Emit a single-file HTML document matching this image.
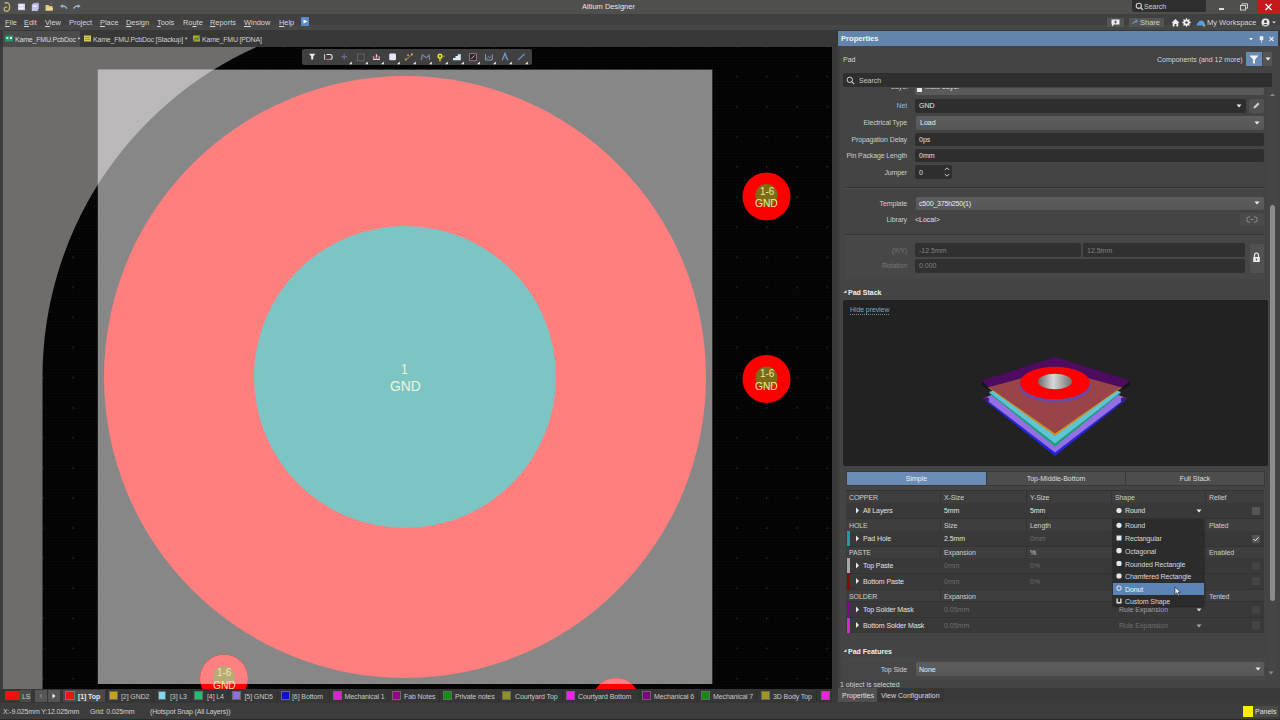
<!DOCTYPE html>
<html><head><meta charset="utf-8">
<style>
*{box-sizing:border-box}
html,body{margin:0;padding:0}
body{width:1280px;height:720px;overflow:hidden;position:relative;background:#3c3c3c;font-family:"Liberation Sans",sans-serif;font-size:7px;color:#d6d6d6}
.a{position:absolute;white-space:nowrap}
.t{position:absolute;white-space:nowrap;line-height:1}
.m{position:absolute;top:0}
.lbl{font-size:7px;color:#cdcdcd;text-align:right;letter-spacing:-0.12px}
.hr{left:846px;width:418px;background:#3e3e3e}
.dr{left:846px;width:418px;background:#393939}
.th{font-size:7px;color:#cfcfcf;letter-spacing:-0.1px}
.td{font-size:7px;color:#e2e2e2;letter-spacing:-0.1px}
.tdd{font-size:7px;color:#6e6e6e}
.dm{left:1125px;font-size:7px;color:#d8d8d8;letter-spacing:-0.1px}
.lb{font-size:7px;color:#c8c8c8;letter-spacing:-0.1px}
.fd{background:#2e2e2e;border-radius:2px}
.dd{background:linear-gradient(#5e5e5e,#565656);border-radius:2px}
</style></head><body>

<!-- title bar -->
<div class="a" style="left:0;top:0;width:1280px;height:13.5px;background:#4f4f4e"></div>
<div class="t" style="left:582px;top:3px;font-size:7.5px;color:#e6e6e6">Altium Designer</div>

<!-- menu bar -->
<div class="a" style="left:0;top:13.5px;width:1280px;height:16px;background:linear-gradient(#404040 0,#414141 68%,#474747 72%,#474747 100%)"></div>
<!-- tab bar -->
<div class="a" style="left:0;top:29.5px;width:1280px;height:17.5px;background:#383838"></div>


<!-- title bar icons -->
<svg class="a" style="left:0;top:0" width="90" height="14">
  <path d="M4.6,3 Q9.6,1.8 9.6,6.8 Q9.6,11.3 6.4,11.3 Q4,11.3 4.2,8.8 Q4.5,6.6 7.2,7.2" fill="none" stroke="#c4b478" stroke-width="1.3"/>
  <rect x="18" y="3.6" width="7" height="6.6" fill="#cfcde8"/><rect x="19.3" y="4.6" width="4.4" height="1.6" fill="#f4f4fc"/><rect x="19.3" y="7.4" width="4.4" height="1.8" fill="#f4f4fc"/>
  <rect x="33" y="2.8" width="6" height="6.5" fill="#a8a6d4"/><rect x="31.8" y="4.2" width="6" height="6.8" fill="#c4c2e8"/><rect x="33" y="5.5" width="3.6" height="1.5" fill="#eeeefa"/>
  <path d="M45.5,5 L48.5,5 L49.5,6 L52.5,6 L52.5,10.5 L45.5,10.5 Z" fill="#d8c890"/><path d="M46.5,7.8 L53.2,7.8 L52.5,10.5 L45.5,10.5 Z" fill="#f0d888"/><path d="M51,4.5 L52,2.5" stroke="#a0a0a0" stroke-width="0.6"/>
  <path d="M61.5,6.4 Q65,5 67,8.6" fill="none" stroke="#9ab8dc" stroke-width="1.3"/><path d="M60,6.3 L62.6,4.2 L62.8,8Z" fill="#9ab8dc"/>
  <path d="M79,6.4 Q75.5,5 73.6,8.6" fill="none" stroke="#9ab8dc" stroke-width="1.3"/><path d="M80.6,6.3 L78,4.2 L77.8,8Z" fill="#9ab8dc"/>
</svg>
<!-- title search -->
<div class="a" style="left:1132px;top:0;width:74px;height:12px;background:#2f2f2f;border-radius:0 0 2px 2px"></div>
<svg class="a" style="left:1135px;top:2px" width="9" height="9"><circle cx="3.8" cy="3.8" r="2.6" fill="none" stroke="#d0d0d0" stroke-width="1.1"/><path d="M5.6,5.6 L8,8" stroke="#d0d0d0" stroke-width="1.2"/></svg>
<div class="t" style="left:1144px;top:3px;font-size:7px;color:#cfcfcf">Search</div>
<div class="a" style="left:1219px;top:8px;width:5px;height:1.5px;background:#dcdcdc"></div>
<svg class="a" style="left:1240px;top:3px" width="9" height="8"><rect x="0.5" y="2.5" width="5" height="4.5" fill="none" stroke="#dcdcdc" stroke-width="0.9"/><path d="M2,2.5 V0.8 H7.5 V5.2 H5.5" fill="none" stroke="#dcdcdc" stroke-width="0.9"/></svg>
<div class="a" style="left:1257px;top:0;width:23px;height:14px;background:#c41a1e"></div>
<svg class="a" style="left:1264px;top:3px" width="9" height="8"><path d="M1.5,1 L7.5,7 M7.5,1 L1.5,7" stroke="#fff" stroke-width="1.2"/></svg>

<!-- menu -->
<div class="t" style="left:5px;top:19px;font-size:7.4px;color:#d8d8d8">
<span class="m" style="left:0"><u>F</u>ile</span><span class="m" style="left:19px"><u>E</u>dit</span><span class="m" style="left:40px"><u>V</u>iew</span><span class="m" style="left:64px">Pro<u>j</u>ect</span><span class="m" style="left:95px"><u>P</u>lace</span><span class="m" style="left:121px"><u>D</u>esign</span><span class="m" style="left:152px"><u>T</u>ools</span><span class="m" style="left:178px">Ro<u>u</u>te</span><span class="m" style="left:205px"><u>R</u>eports</span><span class="m" style="left:239px"><u>W</u>indow</span><span class="m" style="left:274px"><u>H</u>elp</span></div>
<div class="a" style="left:301px;top:17px;width:8px;height:9px;background:#5c8cc4;border-radius:1px"></div>
<svg class="a" style="left:303px;top:19px" width="5" height="5"><path d="M0.5,0.5 L4.5,2.5 L0.5,4.5Z" fill="#fff"/></svg>

<!-- menu right -->
<div class="a" style="left:1107px;top:18px;width:17px;height:9px;background:#555"></div>
<svg class="a" style="left:1111px;top:19px" width="10" height="8"><path d="M0.5,0.5 H8.5 V5.5 H3 L1,7.5 V5.5 H0.5Z" fill="#eee"/><path d="M4.5,1.5 V4.5 M3,3 H6" stroke="#555" stroke-width="0.9"/></svg>
<div class="a" style="left:1129px;top:18px;width:35px;height:9px;background:#555"></div>
<svg class="a" style="left:1132px;top:19px" width="7" height="6"><path d="M0.5,5 Q1.5,2 5,2 M3.5,0.5 L5.5,2 L3.5,3.5" fill="none" stroke="#6f9fd8" stroke-width="1"/></svg>
<div class="t" style="left:1140px;top:19px;font-size:7.5px;color:#cfcfcf">Share</div>
<svg class="a" style="left:1171px;top:18px" width="9" height="9"><path d="M4.5,1 L8.5,4.8 H7.3 V8.5 H5.4 V6 H3.6 V8.5 H1.7 V4.8 H0.5Z" fill="#f0f0f0"/></svg>
<svg class="a" style="left:1182px;top:18px" width="9" height="9"><circle cx="4.5" cy="4.5" r="3.1" fill="#f0f0f0"/><circle cx="4.5" cy="4.5" r="1.3" fill="#404040"/><path d="M4.5,0.3 V8.7 M0.3,4.5 H8.7 M1.5,1.5 L7.5,7.5 M7.5,1.5 L1.5,7.5" stroke="#f0f0f0" stroke-width="1.3"/><circle cx="4.5" cy="4.5" r="1.2" fill="#404040"/></svg>
<svg class="a" style="left:1196px;top:18px" width="10" height="9"><path d="M1,7.5 Q0,5.5 2,5 Q2.5,2 5.5,2.5 Q8,2.5 8.5,5 Q9.5,6 9,7.5Z" fill="#5a9ae0"/><circle cx="8" cy="7.5" r="1.3" fill="#6cc06c"/></svg>
<div class="t" style="left:1207px;top:19px;font-size:7.5px;color:#d8d8d8">My Workspace</div>
<svg class="a" style="left:1261px;top:18px" width="18" height="9"><circle cx="4.5" cy="4.5" r="4" fill="#e8e8e8"/><circle cx="4.5" cy="3.5" r="1.5" fill="#404040"/><path d="M1.8,7.2 Q4.5,4.8 7.2,7.2" fill="#404040"/><path d="M11,3.5 L15,3.5 L13,5.5Z" fill="#dcdcdc"/></svg>

<!-- doc tabs -->
<div class="a" style="left:3px;top:31px;width:77px;height:16px;background:#4b4b4b"></div>
<svg class="a" style="left:5px;top:35px" width="9" height="8"><rect x="0" y="0.5" width="8" height="6" fill="#1e9a6a"/><rect x="1.3" y="2" width="2" height="2" fill="#d8f0e0"/><rect x="5" y="2" width="2" height="2" fill="#d8f0e0"/></svg>
<div class="t" style="left:15px;top:36px;font-size:7px;letter-spacing:-0.2px;color:#dcdcdc">Kame_FMU.PcbDoc *</div>
<svg class="a" style="left:84px;top:35px" width="8" height="8"><rect x="0" y="0.5" width="7" height="6" fill="#d8c860"/><rect x="1" y="2" width="5" height="1" fill="#a89838"/><rect x="1" y="4" width="5" height="1" fill="#a89838"/></svg>
<div class="t" style="left:93px;top:36px;font-size:7px;letter-spacing:-0.2px;color:#cfcfcf">Kame_FMU.PcbDoc [Stackup] *</div>
<svg class="a" style="left:193px;top:35px" width="8" height="8"><rect x="0" y="0.5" width="7" height="6" fill="#b8a820"/><path d="M0.5,6 L3,3 L5,4.5 L7,1" fill="none" stroke="#2a8a5a" stroke-width="1.2"/></svg>
<div class="t" style="left:202px;top:36px;font-size:7px;letter-spacing:-0.2px;color:#cfcfcf">Kame_FMU [PDNA]</div>

<!-- canvas -->
<div class="a" style="left:0;top:47px;width:837px;height:642px;background:#3c3c3c"></div>
<svg class="a" style="left:0;top:0" width="837" height="689" viewBox="0 0 837 689">
  <defs>
    <clipPath id="cv"><rect x="3" y="47" width="829" height="642"/></clipPath>
    <clipPath id="brd"><rect x="97.8" y="69.6" width="614.5" height="614.4"/></clipPath>
  </defs>
  <g clip-path="url(#cv)">
    <rect x="3" y="47" width="829" height="642" fill="#010101"/>
    <defs>
      <pattern id="g3" x="0.7" y="0.4" width="3" height="3" patternUnits="userSpaceOnUse"><rect x="0" y="0" width="3" height="0.8" fill="#080808"/><rect x="0" y="0" width="0.8" height="3" fill="#080808"/></pattern>
      <pattern id="g30" x="72" y="75.6" width="30.17" height="30.1" patternUnits="userSpaceOnUse"><rect x="0" y="0" width="2" height="2" fill="#191919"/></pattern>
    </defs>
    <rect x="3" y="47" width="829" height="642" fill="url(#g3)"/>
    <rect x="3" y="47" width="829" height="642" fill="url(#g30)"/>
    <path d="M3,47 L256.4,47 A361.5 361.5 0 0 0 42.5,377 L42.5,689 L3,689 Z" fill="#6f6d6c"/>
    <rect x="97.8" y="69.6" width="614.5" height="614.4" fill="#878787"/>
    <path clip-path="url(#brd)" d="M3,47 L256.4,47 A361.5 361.5 0 0 0 42.5,377 L42.5,689 L3,689 Z" fill="#bab8b8"/>
    <circle cx="405" cy="377" r="301" fill="#ff7f7f"/>
    <circle cx="405" cy="377" r="151" fill="#7dc5c4"/>
  </g>
</svg>


<!-- canvas overlays -->
<svg class="a" style="left:0;top:0" width="837" height="689">
  <defs><clipPath id="cv2"><rect x="3" y="47" width="829" height="642"/></clipPath>
  <clipPath id="brd2"><rect x="97.8" y="69.6" width="614.5" height="614.4"/></clipPath></defs>
  <g clip-path="url(#cv2)">
  <!-- right pads -->
  <circle cx="766.5" cy="196.5" r="24" fill="#fe0000"/>
  <circle cx="766.5" cy="195" r="11" fill="#7e6c12"/>
  <circle cx="766.5" cy="379" r="24" fill="#fe0000"/>
  <circle cx="766.5" cy="377.5" r="11" fill="#7e6c12"/>
  <!-- bottom pads -->
  <circle cx="224" cy="678.5" r="24" fill="#fe0000"/>
  <g clip-path="url(#brd2)"><circle cx="224" cy="678.5" r="24" fill="#ff8080"/><circle cx="224" cy="677" r="11" fill="#b8aa78"/></g>
  <circle cx="616" cy="702" r="24" fill="#fe0000"/>
  <g clip-path="url(#brd2)"><circle cx="616" cy="702" r="24" fill="#ff8080"/></g>
  </g>
</svg>
<div class="t" style="left:401px;top:361.3px;font-size:15.5px;color:#eef6d8;transform:scaleX(0.78);transform-origin:0 0">1</div>
<div class="t" style="left:389.5px;top:378.3px;font-size:15.5px;color:#eef6d8;transform:scaleX(0.89);transform-origin:0 0">GND</div>
<div class="t" style="left:759.8px;top:185.5px;font-size:11.5px;color:#f4e6a4;transform:scaleX(0.86);transform-origin:0 0">1-6</div>
<div class="t" style="left:755.3px;top:198px;font-size:11px;color:#f4e6a4;transform:scaleX(0.93);transform-origin:0 0">GND</div>
<div class="t" style="left:759.8px;top:368px;font-size:11.5px;color:#f4e6a4;transform:scaleX(0.86);transform-origin:0 0">1-6</div>
<div class="t" style="left:755.3px;top:380.5px;font-size:11px;color:#f4e6a4;transform:scaleX(0.93);transform-origin:0 0">GND</div>
<div class="a" style="left:190px;top:640px;width:70px;height:49px;overflow:hidden">
<div class="t" style="left:27px;top:27px;font-size:11.5px;color:#f4e6a4;transform:scaleX(0.86);transform-origin:0 0">1-6</div>
<div class="t" style="left:23px;top:40px;font-size:11px;color:#f4e6a4;transform:scaleX(0.93);transform-origin:0 0">GND</div>
</div>

<!-- floating toolbar -->
<div class="a" style="left:302px;top:49.3px;width:229.5px;height:15.3px;background:#404040;border-radius:2px"></div>
<svg class="a" style="left:302px;top:49px" width="230" height="16" viewBox="0 0 230 16">
  <path d="M7,4.8 H13.4 L11.2,7.5 V10.6 H9.2 V7.5Z" fill="#e8eef2"/>
  <path d="M22.6,5.2 V10.8" stroke="#d8d8d8" stroke-width="1"/><path d="M24.5,5.5 H28 Q30.2,5.5 30.2,8 Q30.2,10.5 28,10.5 H24.5" fill="none" stroke="#e4e4e4" stroke-width="1.1"/><path d="M25,10.5 H28.5" stroke="#c87878" stroke-width="1.1"/>
  <path d="M42.2,4.8 V10.8 M39.2,7.8 H45.3" stroke="#7a78a8" stroke-width="0.9"/>
  <rect x="55.5" y="5" width="6.7" height="6.8" fill="none" stroke="#686868" stroke-width="0.8"/>
  <path d="M71,11 H78 V9.8 H71Z" fill="#dcdcf4"/><path d="M71.6,9.8 V7.3 M74.5,9.8 V5.2 M77.3,9.8 V7.3" stroke="#d89098" stroke-width="1.5"/><path d="M74.5,5.5 V8" stroke="#e8e8f0" stroke-width="0.8"/>
  <rect x="87.2" y="4.6" width="6.8" height="6.6" fill="#e4e4f2" rx="1.2"/>
  <path d="M103.5,11 L110,5.5" stroke="#8a7040" stroke-width="1.1"/><circle cx="103.8" cy="10.6" r="1" fill="#c8a850"/><circle cx="110" cy="5.3" r="1.1" fill="#c8a850"/><circle cx="106" cy="6.2" r="0.9" fill="#c8a850"/>
  <path d="M119.2,11 L120.5,6 L124.5,8.8 L127,6 L127.8,11" fill="none" stroke="#7888a8" stroke-width="1.2"/>
  <circle cx="138" cy="7.2" r="2.6" fill="#e8e020"/><circle cx="138" cy="7.2" r="1.1" fill="#605810"/><path d="M138,9.6 V12.2" stroke="#e8d840" stroke-width="1.4"/><path d="M140.6,7.2 H143" stroke="#50a050" stroke-width="1.2"/>
  <path d="M151,11.2 V9 H153.5 V7 H155.8 V5.2 H158.8 V11.2Z" fill="#d8eaf4"/>
  <rect x="167.6" y="4.7" width="6.8" height="7" fill="#2c2428" stroke="#a87898" stroke-width="0.9"/><path d="M169.3,10 L172.7,6.4" stroke="#e0c8b0" stroke-width="0.9"/>
  <path d="M183.5,5.2 V11 H190.3 V5.2" fill="none" stroke="#8898b0" stroke-width="1"/><path d="M184.8,9.8 L186.5,7.5 L188,9 L189,7.2" fill="none" stroke="#8898b0" stroke-width="0.7"/>
  <path d="M200.2,11.3 L203,4.5 L205.8,11.3" fill="none" stroke="#7898c8" stroke-width="1.3"/><path d="M201.5,9 H204.5" stroke="#5070a0" stroke-width="0.7"/>
  <path d="M216,11 L222.6,5" stroke="#7098c8" stroke-width="1.1"/>
  <g fill="#f0f0f0"><path d="M47.0,15.3 L49.8,12.5 V15.3Z"/><path d="M63.0,15.3 L65.8,12.5 V15.3Z"/><path d="M79.0,15.3 L81.8,12.5 V15.3Z"/><path d="M95.0,15.3 L97.8,12.5 V15.3Z"/><path d="M111.0,15.3 L113.8,12.5 V15.3Z"/><path d="M127.0,15.3 L129.8,12.5 V15.3Z"/><path d="M143.0,15.3 L145.8,12.5 V15.3Z"/><path d="M159.0,15.3 L161.8,12.5 V15.3Z"/><path d="M175.0,15.3 L177.8,12.5 V15.3Z"/><path d="M191.0,15.3 L193.8,12.5 V15.3Z"/><path d="M207.0,15.3 L209.8,12.5 V15.3Z"/><path d="M223.0,15.3 L225.8,12.5 V15.3Z"/></g>
</svg>
<!-- right panel -->
<div class="a" style="left:832px;top:30px;width:5px;height:675px;background:#383838"></div>
<div class="a" style="left:837px;top:46.3px;width:443px;height:658px;background:#444444"></div>
<div class="a" style="left:837px;top:46.3px;width:2.5px;height:642px;background:#3f3f3f"></div>
<div class="a" style="left:837.5px;top:31.3px;width:440.5px;height:15px;background:#6384ab"></div>
<div class="a" style="left:836px;top:31.3px;width:1.5px;height:15px;background:#2f3a33"></div>
<div class="t" style="left:841px;top:35px;font-size:7.6px;font-weight:bold;color:#f4f4f4">Properties</div>
<svg class="a" style="left:1246px;top:35px" width="32" height="9">
  <path d="M3,3 L7,3 L5,5.5Z" fill="#e8eef6"/>
  <path d="M14,1.5 H17 V5 H14Z M15.5,5 V8" fill="#e8eef6" stroke="#e8eef6" stroke-width="0.6"/>
  <path d="M23.5,2 L27.5,6 M27.5,2 L23.5,6" stroke="#e8eef6" stroke-width="1.1"/>
</svg>
<div class="t" style="left:843px;top:55.5px;font-size:7px;color:#d4d4d4">Pad</div>
<div class="t" style="left:1157px;top:55.5px;font-size:7px;color:#d4d4d4">Components (and 12 more)</div>
<div class="a" style="left:1246px;top:52px;width:16px;height:14px;background:#6a8cb4"></div>
<svg class="a" style="left:1249px;top:55px" width="10" height="9"><path d="M0.5,0.5 H9.5 L6,4.5 V8.5 H4 V4.5Z" fill="#f4f4f4"/></svg>
<div class="a" style="left:1263px;top:52px;width:9px;height:14px;background:#555"></div>
<svg class="a" style="left:1265px;top:57px" width="6" height="4"><path d="M0.5,0.5 H5.5 L3,3.5Z" fill="#eee"/></svg>

<div class="a" style="left:843px;top:73px;width:429px;height:14px;background:#2f2f2f;border-radius:2px"></div>
<svg class="a" style="left:846px;top:76px" width="9" height="9"><circle cx="3.8" cy="3.8" r="2.7" fill="none" stroke="#cfcfcf" stroke-width="1"/><path d="M5.7,5.7 L8.2,8.2" stroke="#cfcfcf" stroke-width="1.1"/></svg>
<div class="t" style="left:859px;top:76.5px;font-size:7px;color:#c8c8c8">Search</div>

<!-- clipped scrolling content -->
<div class="a" style="left:837px;top:88px;width:431px;height:595px;overflow:hidden">
 <div class="a" style="left:-837px;top:-88px;width:1280px;height:720px">
  <div class="a" style="left:915px;top:81px;width:349px;height:14px;background:#5a5a5a;border-radius:2px"></div>
  <div class="t" style="left:891px;top:82.5px;font-size:7px;color:#cfcfcf">Layer</div>
  <div class="a" style="left:917px;top:85px;width:5px;height:7px;background:#e8e8e8"></div>
  <div class="t" style="left:925px;top:82.5px;font-size:7px;color:#e6e6e6">Multi-Layer</div>
 </div>
</div>
<div class="a" style="left:1268px;top:88px;width:8px;height:595px;background:#454545"></div>
<div class="a" style="left:1270px;top:205px;width:5px;height:396px;background:#8c8c8c;border-radius:2.5px"></div>
<svg class="a" style="left:1269px;top:92px" width="7" height="5"><path d="M1,4 L3.5,1.5 L6,4Z" fill="#8a8a8a"/></svg>

<div class="t lbl" style="right:373px;top:102px;color:#8fb6dc">Net</div>
<div class="a fd" style="left:915px;top:98.5px;width:331px;height:14px"></div>
<div class="t" style="left:919px;top:102px;font-size:7px;color:#e8e8e8">GND</div>
<svg class="a" style="left:1236px;top:103.5px" width="6" height="4"><path d="M0.5,0.5 H5.5 L3,3.5Z" fill="#eee"/></svg>
<div class="a" style="left:1249px;top:99px;width:15px;height:13.5px;background:#515151;border-radius:2px"></div>
<svg class="a" style="left:1252px;top:101px" width="9" height="9"><path d="M1.5,7.5 L2,5.5 L6,1.5 L7.5,3 L3.5,7Z" fill="#cfcfcf"/></svg>

<div class="t lbl" style="right:373px;top:119px">Electrical Type</div>
<div class="a dd" style="left:916px;top:116px;width:348px;height:13.5px"></div>
<div class="t" style="left:920px;top:119px;font-size:7px;color:#eeeeee">Load</div>
<svg class="a" style="left:1254px;top:121px" width="6" height="4"><path d="M0.5,0.5 H5.5 L3,3.5Z" fill="#eee"/></svg>

<div class="t lbl" style="right:373px;top:135.5px">Propagation Delay</div>
<div class="a fd" style="left:915px;top:132.5px;width:349px;height:13.5px"></div>
<div class="t" style="left:919px;top:135.5px;font-size:7px;color:#e0e0e0">0ps</div>

<div class="t lbl" style="right:373px;top:152px">Pin Package Length</div>
<div class="a fd" style="left:915px;top:148.7px;width:349px;height:13.5px"></div>
<div class="t" style="left:919px;top:152px;font-size:7px;color:#e0e0e0">0mm</div>

<div class="t lbl" style="right:373px;top:168.5px">Jumper</div>
<div class="a fd" style="left:915px;top:165px;width:37px;height:14px"></div>
<div class="t" style="left:919px;top:168.5px;font-size:7px;color:#e0e0e0">0</div>
<svg class="a" style="left:944px;top:166px" width="6" height="12"><path d="M0.8,4 L3,1.8 L5.2,4 M0.8,8 L3,10.2 L5.2,8" fill="none" stroke="#d8d8d8" stroke-width="0.9"/></svg>

<div class="a" style="left:845px;top:186.5px;width:419px;height:1px;background:#363636"></div>
<div class="a" style="left:845px;top:187.5px;width:419px;height:1px;background:#4c4c4c"></div>

<div class="t lbl" style="right:373px;top:199.5px">Template</div>
<div class="a dd" style="left:916px;top:196.5px;width:348px;height:13.5px"></div>
<div class="t" style="left:919px;top:199.5px;font-size:7px;letter-spacing:-0.2px;color:#eeeeee">c500_375h250(1)</div>
<svg class="a" style="left:1254px;top:201px" width="6" height="4"><path d="M0.5,0.5 H5.5 L3,3.5Z" fill="#eee"/></svg>

<div class="t lbl" style="right:373px;top:216px">Library</div>
<div class="t" style="left:915px;top:216px;font-size:7px;color:#e0e0e0">&lt;Local&gt;</div>
<div class="a" style="left:1240px;top:213px;width:24px;height:13px;background:#4a4a4a;border-radius:1px"></div>
<svg class="a" style="left:1246px;top:216px" width="12" height="7"><path d="M4,1 H2.5 Q0.8,1 0.8,3.5 Q0.8,6 2.5,6 H4 M8,1 H9.5 Q11.2,1 11.2,3.5 Q11.2,6 9.5,6 H8 M4.5,3.5 H7.5" fill="none" stroke="#9a9a9a" stroke-width="0.9"/></svg>

<div class="a" style="left:845px;top:233.5px;width:419px;height:1px;background:#363636"></div>
<div class="a" style="left:845px;top:234.5px;width:419px;height:44px;background:#474747"></div>

<div class="t lbl" style="right:373px;top:246.5px;color:#767676">(X/Y)</div>
<div class="a fd" style="left:915px;top:243px;width:165.5px;height:13.5px;background:#303030"></div>
<div class="t" style="left:919px;top:246.5px;font-size:7px;color:#808080">-12.5mm</div>
<div class="a fd" style="left:1083px;top:243px;width:162px;height:13.5px;background:#303030"></div>
<div class="t" style="left:1087px;top:246.5px;font-size:7px;color:#808080">12.5mm</div>
<div class="a" style="left:1249.5px;top:243.5px;width:14.5px;height:29px;background:#515151;border-radius:1px"></div>
<svg class="a" style="left:1252px;top:252px" width="9" height="11"><path d="M2.5,5 V3.5 Q2.5,1 4.5,1 Q6.5,1 6.5,3.5 V5" fill="none" stroke="#f0f0f0" stroke-width="1.2"/><rect x="1.2" y="5" width="6.6" height="5" fill="#f0f0f0"/><circle cx="4.5" cy="7.5" r="0.9" fill="#555"/></svg>
<div class="t lbl" style="right:373px;top:262px;color:#767676">Rotation</div>
<div class="a fd" style="left:915px;top:259px;width:330px;height:14px;background:#303030"></div>
<div class="t" style="left:919px;top:262px;font-size:7px;color:#808080">0.000</div>

<svg class="a" style="left:843px;top:289px" width="5" height="5"><path d="M0.5,4 L3.5,1 V4Z" fill="#e0e0e0"/></svg>
<div class="t" style="left:848px;top:288.5px;font-size:7px;font-weight:bold;color:#f0f0f0">Pad Stack</div>

<div class="a" style="left:843px;top:300px;width:425px;height:165.5px;background:#222222;border-radius:2px"></div>
<div class="t" style="left:850px;top:306.5px;font-size:6.8px;color:#82a6cc;border-bottom:1px dotted #6a8cb0;padding-bottom:0.5px">Hide preview</div>



<!-- 3D preview -->
<svg class="a" style="left:960px;top:340px" width="190" height="130" viewBox="960 340 190 130">
  <path d="M983,399 L1055,369 L1127,399 L1055,456Z" fill="#2424d8"/>
  <path d="M984,398 L1055,369 L1126,398 L1055,452.5Z" fill="#9470e0"/>
  <path d="M983,396.5 L989,398 L989,401.5 L984,400Z" fill="#4a1a60"/>
  <path d="M1121,398 L1127,396.5 L1126,400 L1121,401.5Z" fill="#4a1a60"/>
  <path d="M989,393 L1055,369 L1121,393 L1055,446.5Z" fill="#18a078"/>
  <path d="M989,392 L1055,369 L1121,392 L1055,443.5Z" fill="#60c4d4"/>
  <path d="M987.5,387 L1055,369 L1122.5,387 L1055,436Z" fill="#c89028"/>
  <path d="M988.5,387 L1055,369 L1121.5,387 L1055,433.5Z" fill="#984448"/>
  <path d="M982,380.5 L1055,357 L1130,380.5 L1122,387.5 L1055,369 L988,387.5Z" fill="#4e0c60"/>
  <path d="M982,381 L988,387.5 L988,390 L982,385Z" fill="#151515"/>
  <path d="M1130,381 L1122,387.5 L1122,390 L1130,385Z" fill="#151515"/>
  <ellipse cx="1055" cy="385.5" rx="36" ry="16.8" fill="#6a48a8"/>
  <ellipse cx="1055" cy="383" rx="35" ry="16.3" fill="#fe0000"/>
  <defs><linearGradient id="hg" x1="0" x2="1"><stop offset="0" stop-color="#6a6a6a"/><stop offset="0.45" stop-color="#d8d8d8"/><stop offset="1" stop-color="#707070"/></linearGradient></defs>
  <ellipse cx="1055" cy="381.5" rx="17" ry="7.7" fill="url(#hg)"/>
</svg>

<!-- segmented -->
<div class="a" style="left:846px;top:470.5px;width:419px;height:15px;background:#3a3a3a"></div>
<div class="a" style="left:847px;top:471.5px;width:139px;height:13px;background:#6a8cb5"></div>
<div class="a" style="left:987px;top:471.5px;width:138px;height:13px;background:#4d4d4d"></div>
<div class="a" style="left:1126px;top:471.5px;width:138px;height:13px;background:#4d4d4d"></div>
<div class="t" style="left:847px;width:139px;text-align:center;top:474.5px;font-size:7px;color:#eef2f8">Simple</div>
<div class="t" style="left:987px;width:138px;text-align:center;top:474.5px;font-size:7px;color:#dcdcdc">Top-Middle-Bottom</div>
<div class="t" style="left:1126px;width:138px;text-align:center;top:474.5px;font-size:7px;color:#dcdcdc">Full Stack</div>

<!-- table -->
<div class="a" style="left:846px;top:490px;width:418px;height:143px;background:#333"></div>
<div class="a hr" style="top:491px;height:11.5px"></div>
<div class="a dr" style="top:503px;height:15px"></div>
<div class="a hr" style="top:519px;height:11.5px"></div>
<div class="a dr" style="top:531px;height:15px"></div>
<div class="a hr" style="top:546.5px;height:11px"></div>
<div class="a dr" style="top:558px;height:15px"></div>
<div class="a dr" style="top:573.5px;height:15.5px"></div>
<div class="a hr" style="top:590px;height:11px"></div>
<div class="a dr" style="top:602px;height:15px"></div>
<div class="a dr" style="top:617.5px;height:15px"></div>
<div class="a" style="left:939.5px;top:491px;width:1px;height:11.5px;background:#333"></div>
<div class="a" style="left:1025.5px;top:491px;width:1px;height:11.5px;background:#333"></div>
<div class="a" style="left:1110.5px;top:491px;width:1px;height:11.5px;background:#333"></div>
<div class="a" style="left:1204.5px;top:491px;width:1px;height:11.5px;background:#333"></div>
<div class="a" style="left:939.5px;top:519px;width:1px;height:11.5px;background:#333"></div>
<div class="a" style="left:1025.5px;top:519px;width:1px;height:11.5px;background:#333"></div>
<div class="a" style="left:1204.5px;top:519px;width:1px;height:11.5px;background:#333"></div>
<div class="a" style="left:939.5px;top:546.5px;width:1px;height:11px;background:#333"></div>
<div class="a" style="left:1025.5px;top:546.5px;width:1px;height:11px;background:#333"></div>
<div class="a" style="left:1204.5px;top:546.5px;width:1px;height:11px;background:#333"></div>
<div class="a" style="left:939.5px;top:590px;width:1px;height:11px;background:#333"></div>
<div class="a" style="left:1204.5px;top:590px;width:1px;height:11px;background:#333"></div>
<div class="a" style="left:847px;top:531px;width:3px;height:15px;background:#18a0a0"></div>
<div class="a" style="left:847px;top:558px;width:3px;height:15px;background:#a8a8a8"></div>
<div class="a" style="left:847px;top:573.5px;width:3px;height:15.5px;background:#8a0a0a"></div>
<div class="a" style="left:847px;top:602px;width:3px;height:15px;background:#800a88"></div>
<div class="a" style="left:847px;top:617.5px;width:3px;height:15px;background:#e020e0"></div>

<div class="t th" style="left:849px;top:493.5px">COPPER</div><div class="t th" style="left:944px;top:493.5px">X-Size</div><div class="t th" style="left:1030px;top:493.5px">Y-Size</div><div class="t th" style="left:1115px;top:493.5px">Shape</div><div class="t th" style="left:1209px;top:493.5px">Relief</div>
<div class="t th" style="left:849px;top:521.5px">HOLE</div><div class="t th" style="left:944px;top:521.5px">Size</div><div class="t th" style="left:1030px;top:521.5px">Length</div><div class="t th" style="left:1209px;top:521.5px">Plated</div>
<div class="t th" style="left:849px;top:549px">PASTE</div><div class="t th" style="left:944px;top:549px">Expansion</div><div class="t th" style="left:1030px;top:549px">%</div><div class="t th" style="left:1209px;top:549px">Enabled</div>
<div class="t th" style="left:849px;top:592.5px">SOLDER</div><div class="t th" style="left:944px;top:592.5px">Expansion</div><div class="t th" style="left:1209px;top:592.5px">Tented</div>

<svg class="a" style="left:855px;top:503px" width="5" height="130"><g fill="#e8e8e8"><path d="M1,4.5 L4,7.5 L1,10.5Z"/><path d="M1,32.5 L4,35.5 L1,38.5Z"/><path d="M1,59.5 L4,62.5 L1,65.5Z"/><path d="M1,75 L4,78 L1,81Z"/><path d="M1,103.5 L4,106.5 L1,109.5Z"/><path d="M1,119 L4,122 L1,125Z"/></g></svg>
<div class="t td" style="left:863px;top:507px">All Layers</div><div class="t td" style="left:944px;top:507px">5mm</div><div class="t td" style="left:1030px;top:507px">5mm</div>
<div class="t td" style="left:863px;top:535px">Pad Hole</div><div class="t td" style="left:944px;top:535px">2.5mm</div><div class="t tdd" style="left:1030px;top:535px">0mm</div>
<div class="t td" style="left:863px;top:562px">Top Paste</div><div class="t tdd" style="left:944px;top:562px">0mm</div><div class="t tdd" style="left:1030px;top:562px">0%</div>
<div class="t td" style="left:863px;top:577.5px">Bottom Paste</div><div class="t tdd" style="left:944px;top:577.5px">0mm</div><div class="t tdd" style="left:1030px;top:577.5px">0%</div>
<div class="t td" style="left:863px;top:606px">Top Solder Mask</div><div class="t tdd" style="left:944px;top:606px">0.05mm</div>
<div class="t td" style="left:863px;top:621.5px">Bottom Solder Mask</div><div class="t tdd" style="left:944px;top:621.5px">0.05mm</div>

<svg class="a" style="left:1116px;top:507px" width="6" height="7"><circle cx="3" cy="3.5" r="2.6" fill="#e8e8e8"/></svg>
<div class="t td" style="left:1125px;top:507px">Round</div>
<svg class="a" style="left:1196px;top:509px" width="6" height="4"><path d="M0.5,0.5 H5.5 L3,3.5Z" fill="#eee"/></svg>
<div class="a" style="left:1252px;top:507px;width:8px;height:8px;background:#555;border-radius:1px"></div>
<div class="a" style="left:1252px;top:535px;width:8px;height:8px;background:#555;border-radius:1px"></div>
<svg class="a" style="left:1252px;top:535px" width="8" height="8"><path d="M1.5,4 L3.3,5.8 L6.5,2.3" fill="none" stroke="#f0f0f0" stroke-width="1"/></svg>
<div class="a" style="left:1252px;top:562px;width:8px;height:8px;background:#444;border-radius:1px"></div>
<div class="a" style="left:1252px;top:577px;width:8px;height:8px;background:#444;border-radius:1px"></div>
<div class="a" style="left:1252px;top:606px;width:8px;height:8px;background:#444;border-radius:1px"></div>
<div class="a" style="left:1252px;top:621px;width:8px;height:8px;background:#444;border-radius:1px"></div>
<div class="t tdd" style="left:1119px;top:606px;color:#a0a0a0">Rule Expansion</div>
<svg class="a" style="left:1196px;top:608px" width="6" height="4"><path d="M0.5,0.5 H5.5 L3,3.5Z" fill="#d8d8d8"/></svg>
<div class="t tdd" style="left:1119px;top:621.5px">Rule Expansion</div>
<svg class="a" style="left:1196px;top:623.5px" width="6" height="4"><path d="M0.5,0.5 H5.5 L3,3.5Z" fill="#a8a8a8"/></svg>

<!-- dropdown menu -->
<div class="a" style="left:1112px;top:518.5px;width:91px;height:87.5px;background:#2c2c2c;box-shadow:1px 1px 2px rgba(0,0,0,0.4)"></div>
<div class="a" style="left:1112.5px;top:583px;width:91px;height:12px;background:#5b83b5"></div>
<svg class="a" style="left:1115px;top:518px" width="8" height="88">
 <g fill="#e8e8e8"><circle cx="4" cy="7.3" r="2.6"/><rect x="1.5" y="17.5" width="5" height="5"/><path d="M2.7,30 H5.3 L6.6,31.3 V33.9 L5.3,35.2 H2.7 L1.4,33.9 V31.3Z"/><rect x="1.5" y="43" width="5" height="5" rx="1.5"/><path d="M2.6,55.5 H5.4 L6.5,56.6 V59.4 L5.4,60.5 H2.6 L1.5,59.4 V56.6Z"/><path d="M1.5,80.5 V85.5 H6.5 V80.5 H5.2 V84 H2.8 V80.5Z"/></g>
 <circle cx="4" cy="70.2" r="2.2" fill="none" stroke="#f0f0f0" stroke-width="1"/>
</svg>
<div class="t dm" style="top:522px">Round</div>
<div class="t dm" style="top:535px">Rectangular</div>
<div class="t dm" style="top:547.5px">Octagonal</div>
<div class="t dm" style="top:560.5px">Rounded Rectangle</div>
<div class="t dm" style="top:573px">Chamfered Rectangle</div>
<div class="t dm" style="top:585.5px;color:#f4f4f4">Donut</div>
<div class="t dm" style="top:598px">Custom Shape</div>
<svg class="a" style="left:1174px;top:586px" width="8" height="11"><path d="M1,1 L1,8.5 L2.8,6.8 L4.2,9.8 L5.4,9.2 L4.1,6.3 L6.6,6.2Z" fill="#f8f8f8" stroke="#111" stroke-width="0.6"/></svg>

<!-- pad features -->
<svg class="a" style="left:843px;top:648px" width="5" height="5"><path d="M0.5,4 L3.5,1 V4Z" fill="#e0e0e0"/></svg>
<div class="t" style="left:848px;top:647.5px;font-size:7px;font-weight:bold;color:#f0f0f0">Pad Features</div>
<div class="a" style="left:843px;top:658px;width:423px;height:22px;background:#474747"></div>
<div class="t lbl" style="right:373px;top:665.5px">Top Side</div>
<div class="a dd" style="left:916px;top:662px;width:348px;height:13.5px"></div>
<div class="t" style="left:919px;top:665.5px;font-size:7px;color:#eeeeee">None</div>
<svg class="a" style="left:1255px;top:667px" width="6" height="4"><path d="M0.5,0.5 H5.5 L3,3.5Z" fill="#eee"/></svg>
<svg class="a" style="left:1268px;top:671px" width="6" height="4"><path d="M0.5,0.5 H5.5 L3,3.5Z" fill="#8a8a8a"/></svg>
<div class="t" style="left:840px;top:680.5px;font-size:7px;color:#d0d0d0">1 object is selected</div>
<div class="a" style="left:837px;top:688px;width:443px;height:15px;background:#3a3a3a"></div>
<div class="a" style="left:838px;top:688px;width:39px;height:13.5px;background:#505050"></div>
<div class="a" style="left:877px;top:688px;width:67px;height:13.5px;background:#363636"></div>
<div class="t" style="left:842px;top:691.5px;font-size:7px;color:#e0e0e0">Properties</div>
<div class="t" style="left:881px;top:691.5px;font-size:7px;color:#d8d8d8">View Configuration</div>

<!-- layer bar -->
<div class="a" style="left:0;top:689px;width:837px;height:14px;background:#363636"></div>
<div class="a" style="left:4.5px;top:691px;width:15px;height:8.5px;background:#f01010"></div>
<div class="a" style="left:20px;top:690px;width:11px;height:12px;background:#4a4a4a"></div>
<div class="t lb" style="left:22px;top:692.5px;color:#d0d0d0">LS</div>
<div class="a" style="left:35px;top:690px;width:12px;height:12px;background:#555"></div>
<div class="a" style="left:47.5px;top:690px;width:12px;height:12px;background:#555"></div>
<svg class="a" style="left:35px;top:690px" width="25" height="12"><path d="M7,4 L5,6 L7,8" fill="none" stroke="#8a8a8a" stroke-width="1"/><path d="M52.5,0" /><path d="M17.5,3.5 L20.5,6 L17.5,8.5Z" fill="#f0f0f0"/></svg>
<div class="a" style="left:63px;top:690px;width:42px;height:12px;background:#4a4a4a"></div>
<div class="a" style="left:66px;top:692px;width:7.5px;height:7px;background:#f01010;outline:0.5px solid rgba(255,255,255,0.25)"></div>
<div class="t lb" style="left:78px;top:692.5px;font-weight:bold;color:#e8e8e8;">[1] Top</div>
<div class="a" style="left:110px;top:692px;width:6.5px;height:7px;background:#c8a020;outline:0.5px solid rgba(255,255,255,0.25)"></div>
<div class="t lb" style="left:121px;top:692.5px;">[2] GND2</div>
<div class="a" style="left:158.5px;top:692px;width:6.5px;height:7px;background:#80d8f0;outline:0.5px solid rgba(255,255,255,0.25)"></div>
<div class="t lb" style="left:170px;top:692.5px;">[3] L3</div>
<div class="a" style="left:195px;top:692px;width:6.5px;height:7px;background:#20c070;outline:0.5px solid rgba(255,255,255,0.25)"></div>
<div class="t lb" style="left:207px;top:692.5px;">[4] L4</div>
<div class="a" style="left:233px;top:692px;width:6.5px;height:7px;background:#9070e0;outline:0.5px solid rgba(255,255,255,0.25)"></div>
<div class="t lb" style="left:244.5px;top:692.5px;">[5] GND5</div>
<div class="a" style="left:282px;top:692px;width:6.5px;height:7px;background:#1010d0;outline:0.5px solid rgba(255,255,255,0.25)"></div>
<div class="t lb" style="left:292px;top:692.5px;">[6] Bottom</div>
<div class="a" style="left:334px;top:692px;width:6.5px;height:7px;background:#e020e0;outline:0.5px solid rgba(255,255,255,0.25)"></div>
<div class="t lb" style="left:344.5px;top:692.5px;">Mechanical 1</div>
<div class="a" style="left:393px;top:692px;width:6.5px;height:7px;background:#900090;outline:0.5px solid rgba(255,255,255,0.25)"></div>
<div class="t lb" style="left:404px;top:692.5px;">Fab Notes</div>
<div class="a" style="left:444px;top:692px;width:6.5px;height:7px;background:#109010;outline:0.5px solid rgba(255,255,255,0.25)"></div>
<div class="t lb" style="left:455px;top:692.5px;">Private notes</div>
<div class="a" style="left:503px;top:692px;width:6.5px;height:7px;background:#909020;outline:0.5px solid rgba(255,255,255,0.25)"></div>
<div class="t lb" style="left:515px;top:692.5px;">Courtyard Top</div>
<div class="a" style="left:567px;top:692px;width:6.5px;height:7px;background:#f020f0;outline:0.5px solid rgba(255,255,255,0.25)"></div>
<div class="t lb" style="left:578px;top:692.5px;">Courtyard Bottom</div>
<div class="a" style="left:643px;top:692px;width:6.5px;height:7px;background:#800080;outline:0.5px solid rgba(255,255,255,0.25)"></div>
<div class="t lb" style="left:654px;top:692.5px;">Mechanical 6</div>
<div class="a" style="left:702px;top:692px;width:6.5px;height:7px;background:#108a10;outline:0.5px solid rgba(255,255,255,0.25)"></div>
<div class="t lb" style="left:713px;top:692.5px;">Mechanical 7</div>
<div class="a" style="left:761.5px;top:692px;width:7.0px;height:7px;background:#a09820;outline:0.5px solid rgba(255,255,255,0.25)"></div>
<div class="t lb" style="left:773px;top:692.5px;">3D Body Top</div>
<div class="a" style="left:821.5px;top:692px;width:7.0px;height:7px;background:#f020f0;outline:0.5px solid rgba(255,255,255,0.25)"></div>
<div class="a" style="left:106px;top:690px;width:1px;height:12px;background:#2e2e2e"></div>
<div class="a" style="left:153px;top:690px;width:1px;height:12px;background:#2e2e2e"></div>
<div class="a" style="left:191px;top:690px;width:1px;height:12px;background:#2e2e2e"></div>
<div class="a" style="left:228px;top:690px;width:1px;height:12px;background:#2e2e2e"></div>
<div class="a" style="left:277px;top:690px;width:1px;height:12px;background:#2e2e2e"></div>
<div class="a" style="left:329px;top:690px;width:1px;height:12px;background:#2e2e2e"></div>
<div class="a" style="left:388px;top:690px;width:1px;height:12px;background:#2e2e2e"></div>
<div class="a" style="left:439px;top:690px;width:1px;height:12px;background:#2e2e2e"></div>
<div class="a" style="left:498px;top:690px;width:1px;height:12px;background:#2e2e2e"></div>
<div class="a" style="left:562px;top:690px;width:1px;height:12px;background:#2e2e2e"></div>
<div class="a" style="left:638px;top:690px;width:1px;height:12px;background:#2e2e2e"></div>
<div class="a" style="left:697px;top:690px;width:1px;height:12px;background:#2e2e2e"></div>
<div class="a" style="left:756px;top:690px;width:1px;height:12px;background:#2e2e2e"></div>
<div class="a" style="left:816px;top:690px;width:1px;height:12px;background:#2e2e2e"></div>
<div class="a" style="left:832px;top:689px;width:5px;height:14px;background:#3a3a3a"></div>
<!-- status bar -->
<div class="a" style="left:0;top:703px;width:1280px;height:17px;background:#3d3d3d"></div>
<div class="a" style="left:0;top:719px;width:1280px;height:1px;background:#2a2a2a"></div>
<div class="t" style="left:3px;top:707.5px;font-size:7px;letter-spacing:-0.15px;color:#d0d0d0">X:-9.025mm Y:12.025mm</div>
<div class="t" style="left:90px;top:707.5px;font-size:7px;letter-spacing:-0.15px;color:#d0d0d0">Grid: 0.025mm</div>
<div class="t" style="left:150px;top:707.5px;font-size:7px;letter-spacing:-0.15px;color:#d0d0d0">(Hotspot Snap (All Layers))</div>
<div class="a" style="left:1243px;top:706px;width:10px;height:11px;background:#ffee00"></div>
<div class="a" style="left:1253px;top:706px;width:25px;height:11px;background:#4a4a4a"></div>
<div class="t" style="left:1255px;top:708px;font-size:7px;color:#e0e0e0">Panels</div>
</body></html>
